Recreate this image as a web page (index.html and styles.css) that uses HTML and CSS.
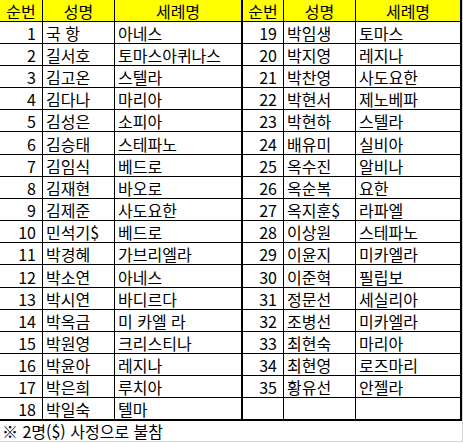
FILE: index.html
```html
<!DOCTYPE html>
<html lang="ko">
<head>
<meta charset="utf-8">
<link rel="stylesheet" href="styles.css">
</head>
<body>
<div class="sheet">
<table class="roster">
<thead>
<tr class="head">
<th class="c1">순번</th><th class="c2">성명</th><th class="c3">세례명</th>
<th class="c4">순번</th><th class="c5">성명</th><th class="c6">세례명</th>
</tr>
</thead>
<tbody>
<tr><td class="c1">1</td><td class="c2">국 항</td><td class="c3">아네스</td><td class="c4">19</td><td class="c5">박임생</td><td class="c6">토마스</td></tr>
<tr><td class="c1">2</td><td class="c2">길서호</td><td class="c3">토마스아퀴나스</td><td class="c4">20</td><td class="c5">박지영</td><td class="c6">레지나</td></tr>
<tr><td class="c1">3</td><td class="c2">김고온</td><td class="c3">스텔라</td><td class="c4">21</td><td class="c5">박찬영</td><td class="c6">사도요한</td></tr>
<tr><td class="c1">4</td><td class="c2">김다나</td><td class="c3">마리아</td><td class="c4">22</td><td class="c5">박현서</td><td class="c6">제노베파</td></tr>
<tr><td class="c1">5</td><td class="c2">김성은</td><td class="c3">소피아</td><td class="c4">23</td><td class="c5">박현하</td><td class="c6">스텔라</td></tr>
<tr class="tall"><td class="c1">6</td><td class="c2">김승태</td><td class="c3">스테파노</td><td class="c4">24</td><td class="c5">배유미</td><td class="c6">실비아</td></tr>
<tr><td class="c1">7</td><td class="c2">김임식</td><td class="c3">베드로</td><td class="c4">25</td><td class="c5">옥수진</td><td class="c6">알비나</td></tr>
<tr><td class="c1">8</td><td class="c2">김재현</td><td class="c3">바오로</td><td class="c4">26</td><td class="c5">옥순복</td><td class="c6">요한</td></tr>
<tr><td class="c1">9</td><td class="c2">김제준</td><td class="c3">사도요한</td><td class="c4">27</td><td class="c5">옥지훈$</td><td class="c6">라파엘</td></tr>
<tr><td class="c1">10</td><td class="c2">민석기$</td><td class="c3">베드로</td><td class="c4">28</td><td class="c5">이상원</td><td class="c6">스테파노</td></tr>
<tr><td class="c1">11</td><td class="c2">박경혜</td><td class="c3">가브리엘라</td><td class="c4">29</td><td class="c5">이윤지</td><td class="c6">미카엘라</td></tr>
<tr class="tall"><td class="c1">12</td><td class="c2">박소연</td><td class="c3">아네스</td><td class="c4">30</td><td class="c5">이준혁</td><td class="c6">필립보</td></tr>
<tr><td class="c1">13</td><td class="c2">박시연</td><td class="c3">바디르다</td><td class="c4">31</td><td class="c5">정문선</td><td class="c6">세실리아</td></tr>
<tr><td class="c1">14</td><td class="c2">박옥금</td><td class="c3">미 카엘 라</td><td class="c4">32</td><td class="c5">조병선</td><td class="c6">미카엘라</td></tr>
<tr><td class="c1">15</td><td class="c2">박원영</td><td class="c3">크리스티나</td><td class="c4">33</td><td class="c5">최현숙</td><td class="c6">마리아</td></tr>
<tr><td class="c1">16</td><td class="c2">박윤아</td><td class="c3">레지나</td><td class="c4">34</td><td class="c5">최현영</td><td class="c6">로즈마리</td></tr>
<tr><td class="c1">17</td><td class="c2">박은희</td><td class="c3">루치아</td><td class="c4">35</td><td class="c5">황유선</td><td class="c6">안젤라</td></tr>
<tr class="last"><td class="c1">18</td><td class="c2">박일숙</td><td class="c3">텔마</td><td class="c4"></td><td class="c5"></td><td class="c6"></td></tr>
</tbody>
</table>
<p class="note">※ 2명($) 사정으로 불참</p>
</div>
</body>
</html>
```
FILE: styles.css
```css
html, body {
  margin: 0;
  padding: 0;
  background: #ffffff;
}

.sheet {
  width: 462px;
  height: 441px;
  border-right: 1px solid #d4d4d4;
  border-bottom: 1px solid #d4d4d4;
  overflow: hidden;
  font-family: "Noto Sans CJK KR", "Noto Sans", sans-serif;
  font-size: 16px;
  color: #000;
}

.roster {
  border-collapse: separate;
  border-spacing: 0;
  table-layout: fixed;
  width: 462px;
}

.roster th,
.roster td {
  box-sizing: border-box;
  height: 22px;
  padding: 1px 2px 0 3px;
  line-height: 20px;
  border-right: 1px solid #000;
  border-bottom: 1px solid #000;
  white-space: nowrap;
  overflow: hidden;
  text-align: left;
  font-weight: normal;
  vertical-align: middle;
}

.roster .head th {
  background: #ffff00;
  text-align: center;
  padding-top: 0;
  padding-left: 0;
  padding-right: 0;
}

.roster .c1 { width: 43px; }
.roster .c2 { width: 72px; }
.roster .c3 { width: 128px; border-right-width: 2px; }
.roster .c4 { width: 41px; }
.roster .c5 { width: 72px; }
.roster .c6 { width: 106px; border-right-width: 2px; }

.roster td.c1,
.roster td.c4 {
  text-align: right;
  padding-right: 6px;
}

.roster tr.tall td { height: 23px; padding-top: 2px; }
.roster tr.last td { height: 23px; border-bottom-width: 2px; }

.note {
  margin: 0;
  padding: 0 0 0 2px;
  line-height: 21px;
}
```
